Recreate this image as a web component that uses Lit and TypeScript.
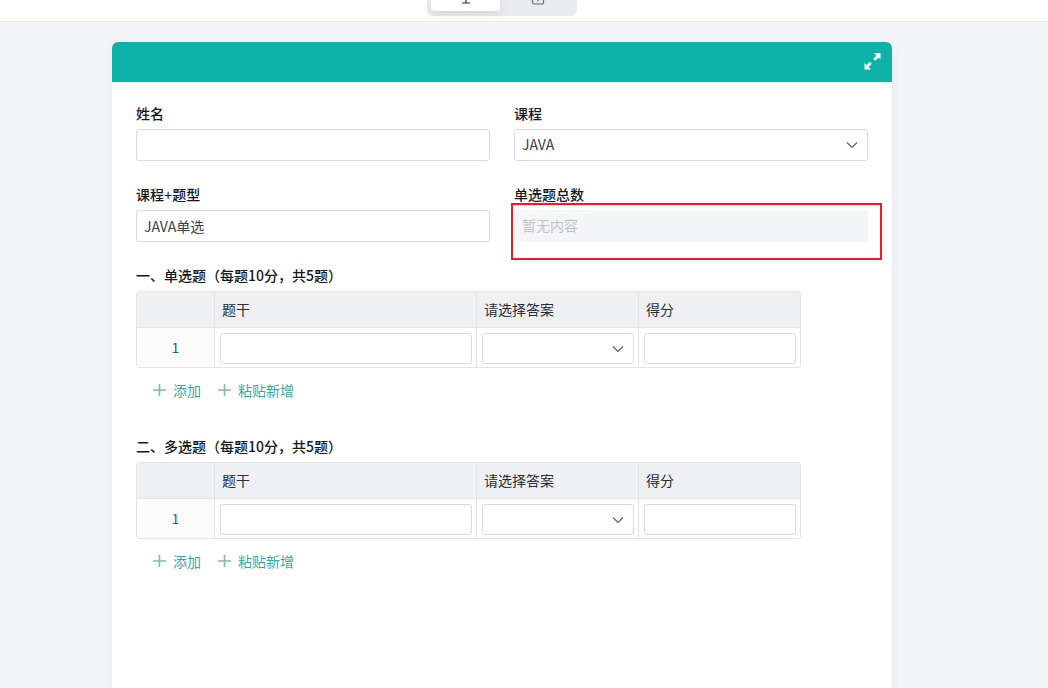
import { LitElement, html, css, svg } from "lit";
import { customElement } from "lit/decorators.js";

const chevron = html`<svg class="chev" width="14" height="14" viewBox="0 0 14 14" fill="none"><path d="M2 4.5 L7 9.5 L12 4.5" stroke="#5b5f68" stroke-width="1.2"/></svg>`;
const plus = html`<svg class="plus" width="14" height="14" viewBox="0 0 14 14"><path d="M6.5 1v12M0 7h13" stroke="#7fb8ae" stroke-width="1.6" fill="none"/></svg>`;
const expand = svg`<svg width="18" height="18" viewBox="0 0 18 18" fill="#fff"><path d="M11 0H17.5v6.5l-2-2-3.2 3.2-2-2 3.2-3.2z"/><path d="M8 16.5H1.5V10l2 2 3.2-3.2 2 2-3.2 3.2z"/></svg>`;

@customElement("app-root")
export class AppRoot extends LitElement {
  static styles = css`
    :host {
      display: block;
      height: 688px;
      overflow: hidden;
      background: #f4f5f9;
      font-family: "Noto Sans CJK SC", "Liberation Sans", sans-serif;
      font-size: 14px;
      color: #1f2329;
    }
    .top {
      height: 21px;
      background: #fff;
      border-bottom: 1px solid #e8e9ee;
      display: flex;
      overflow: hidden;
      padding-left: 427px;
    }
    .seg {
      width: 150px;
      height: 16px;
      background: #ebecf0;
      border-radius: 0 0 6px 6px;
      display: flex;
      padding: 0 4px;
      box-sizing: border-box;
    }
    .seg-a {
      width: 69px;
      height: 11px;
      background: #fff;
      border-radius: 0 0 4px 4px;
      box-shadow: 0 2px 8px rgba(60, 70, 100, 0.16);
      display: flex;
      justify-content: center;
    }
    .seg-a svg, .seg-b svg { display: block; }
    .seg-b {
      flex: 1;
      display: flex;
      justify-content: center;
      padding-left: 3px;
    }
    .card {
      width: 780px;
      margin: 20px 0 0 112px;
      background: #fff;
      border-radius: 6px 6px 0 0;
      box-shadow: 0 2px 10px rgba(60, 70, 100, 0.08);
      height: 700px;
    }
    .head {
      height: 40px;
      background: #0db3a6;
      border-radius: 6px 6px 0 0;
      display: flex;
      align-items: center;
      justify-content: flex-end;
      padding-right: 11px;
    }
    .head svg { display: block; }
    .body { padding: 22px 24px 0; }
    .grid {
      display: grid;
      grid-template-columns: 354px 354px;
      column-gap: 24px;
      row-gap: 24px;
    }
    .field { position: relative; }
    .label {
      font-weight: 500;
      height: 21px;
      line-height: 19px;
      margin-bottom: 4px;
      color: #14171c;
    }
    .plus-sign { font-family: "Liberation Sans", sans-serif; }
    .input {
      height: 32px;
      box-sizing: border-box;
      border: 1px solid #d9dadd;
      border-radius: 3px;
      background: #fff;
      padding: 0 7px 2px;
      display: flex;
      align-items: center;
      justify-content: space-between;
      color: #3a3f47;
      font-size: 14px;
    }
    .input.low { padding-bottom: 0; }
    .input .chev { margin-right: 1px; margin-top: 2px; }
    .disabled {
      background: #f4f5f7;
      border-color: #f4f5f7;
      color: #bfc2c7;
    }
    .mark {
      position: absolute;
      left: -3px;
      top: 18px;
      width: 371px;
      height: 57px;
      box-sizing: border-box;
      border: 2px solid #ed1c24;
    }
    .sec-title {
      font-weight: 500;
      font-size: 14px;
      line-height: 18px;
      color: #14171c;
    }
    .sec1 { margin-top: 24px; }
    .sec2 { margin-top: 36px; }
    .table {
      margin-top: 7px;
      width: 665px;
      box-sizing: border-box;
      border: 1px solid #e3e4e8;
      border-radius: 3px;
      display: grid;
      grid-template-columns: 78px 262px 162px 1fr;
      overflow: hidden;
    }
    .th {
      height: 35px;
      background: #eff0f4;
      border-bottom: 1px solid #e3e4e8;
      border-right: 1px solid #e3e4e8;
      padding-left: 7px;
      line-height: 34px;
      color: #2a2e35;
    }
    .td {
      height: 39px;
      box-sizing: border-box;
      border-right: 1px solid #e3e4e8;
      padding: 5px 4px 3px 5px;
      display: flex;
      align-items: flex-start;
    }
    .last { border-right: 0; }
    .num {
      background: #fbfbfc;
      justify-content: center;
      align-items: center;
      color: #2a5d8c;
      padding: 0 0 2px;
    }
    .td .input { width: 100%; height: 31px; }
    .acts {
      display: flex;
      gap: 17px;
      padding: 12px 0 1px 17px;
      color: #35aaa0;
      line-height: 20px;
    }
    .act { display: flex; align-items: center; gap: 6px; }
  `;

  private section(title: string, cls: string) {
    return html`
      <div class="sec-title ${cls}">${title}</div>
      <div class="table">
        <div class="th"></div>
        <div class="th">题干</div>
        <div class="th">请选择答案</div>
        <div class="th last">得分</div>
        <div class="td num">1</div>
        <div class="td"><div class="input"></div></div>
        <div class="td"><div class="input">
          <span></span>${chevron}
        </div></div>
        <div class="td last"><div class="input"></div></div>
      </div>
      <div class="acts">
        <div class="act">${plus}<span>添加</span></div>
        <div class="act">${plus}<span>粘贴新增</span></div>
      </div>
    `;
  }

  render() {
    return html`
      <div class="top">
        <div class="seg">
          <div class="seg-a"><svg width="12" height="4" viewBox="0 0 12 4"><path d="M6 0v3M2 3h8" stroke="#2a2f3a" stroke-width="1.2" fill="none"/></svg></div>
          <div class="seg-b"><svg width="14" height="5" viewBox="0 0 14 5"><path d="M1.5 0v2.5a1.5 1.5 0 0 0 1.5 1.5h8a1.5 1.5 0 0 0 1.5-1.5V0M7 0v1.5" stroke="#6a6d76" stroke-width="1.2" fill="none"/></svg></div>
        </div>
      </div>
      <div class="card">
        <div class="head">${expand}</div>
        <div class="body">
          <div class="grid">
            <div class="field">
              <div class="label">姓名</div>
              <div class="input"></div>
            </div>
            <div class="field">
              <div class="label">课程</div>
              <div class="input"><span>JAVA</span>${chevron}</div>
            </div>
            <div class="field">
              <div class="label">课程<span class="plus-sign">+</span>题型</div>
              <div class="input low">JAVA单选</div>
            </div>
            <div class="field">
              <div class="label">单选题总数</div>
              <div class="input disabled">暂无内容</div>
              <div class="mark"></div>
            </div>
          </div>
          ${this.section("一、单选题（每题10分，共5题）", "sec1")}
          ${this.section("二、多选题（每题10分，共5题）", "sec2")}
        </div>
      </div>
    `;
  }
}
